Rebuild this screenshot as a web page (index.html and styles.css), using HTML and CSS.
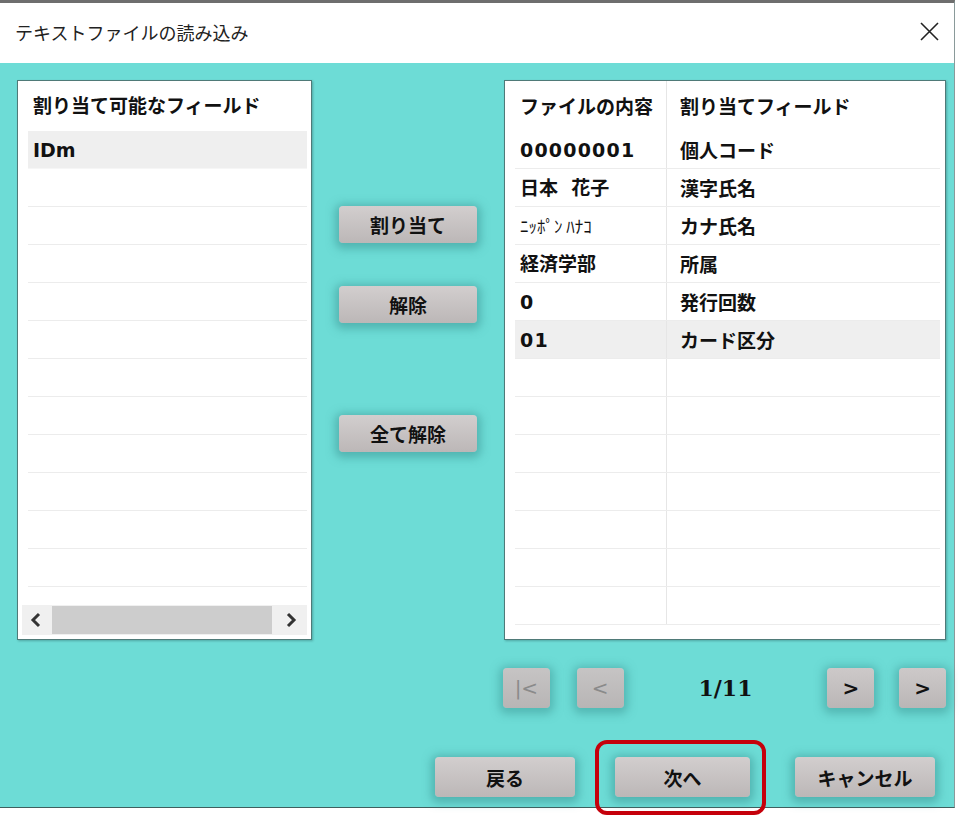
FILE: index.html
```html
<!DOCTYPE html>
<html lang="ja">

<head>
    <meta charset="UTF-8">
    <title>テキストファイルの読み込み</title>
    <link rel="stylesheet" href="styles.css">
</head>

<body>
    <div class="window">
        <div class="titlebar">
            <span class="title">テキストファイルの読み込み</span>
            <svg class="close" width="19" height="19" viewBox="0 0 19 19">
                <path d="M1 1 L18 18 M18 1 L1 18" stroke="#222" stroke-width="1.6" fill="none"/>
            </svg>
        </div>
        <div class="content">
            <div class="main">
                <div class="list">
                    <div class="list_head">割り当て可能なフィールド</div>
                    <div class="list_rows">
                        <div class="row sel">IDm</div>
                        <div class="row"></div>
                        <div class="row"></div>
                        <div class="row"></div>
                        <div class="row"></div>
                        <div class="row"></div>
                        <div class="row"></div>
                        <div class="row"></div>
                        <div class="row"></div>
                        <div class="row"></div>
                        <div class="row"></div>
                        <div class="row"></div>
                    </div>
                    <div class="hscroll">
                        <svg width="30" height="30" viewBox="0 0 30 30">
                            <path d="M17 9 L11 15 L17 21" stroke="#333" stroke-width="3" fill="none"/>
                        </svg>
                        <div class="thumb"></div>
                        <svg width="35" height="30" viewBox="0 0 35 30">
                            <path d="M16 9 L22 15 L16 21" stroke="#333" stroke-width="3" fill="none"/>
                        </svg>
                    </div>
                </div>

                <div class="mid">
                    <a href="javascript:;" class="btn btn_assign">割り当て</a>
                    <a href="javascript:;" class="btn btn_clear">解除</a>
                    <a href="javascript:;" class="btn btn_all">全て解除</a>
                </div>

                <div class="table">
                    <div class="trow thead">
                        <div class="c1">ファイルの内容</div>
                        <div class="c2">割り当てフィールド</div>
                    </div>
                    <div class="trow"><div class="c1 num">00000001</div><div class="c2">個人コード</div></div>
                    <div class="trow"><div class="c1">日本&nbsp;&nbsp;花子</div><div class="c2">漢字氏名</div></div>
                    <div class="trow"><div class="c1 kana">ﾆｯﾎﾟﾝ ﾊﾅｺ</div><div class="c2">カナ氏名</div></div>
                    <div class="trow"><div class="c1">経済学部</div><div class="c2">所属</div></div>
                    <div class="trow"><div class="c1 num">0</div><div class="c2">発行回数</div></div>
                    <div class="trow sel"><div class="c1 num">01</div><div class="c2">カード区分</div></div>
                    <div class="trow"><div class="c1"></div><div class="c2"></div></div>
                    <div class="trow"><div class="c1"></div><div class="c2"></div></div>
                    <div class="trow"><div class="c1"></div><div class="c2"></div></div>
                    <div class="trow"><div class="c1"></div><div class="c2"></div></div>
                    <div class="trow"><div class="c1"></div><div class="c2"></div></div>
                    <div class="trow"><div class="c1"></div><div class="c2"></div></div>
                    <div class="trow"><div class="c1"></div><div class="c2"></div></div>
                </div>
            </div>

            <div class="pager">
                <a href="javascript:;" class="pbtn off">|&lt;</a>
                <a href="javascript:;" class="pbtn off prev">&lt;</a>
                <span class="page">1/11</span>
                <a href="javascript:;" class="pbtn">&gt;</a>
                <a href="javascript:;" class="pbtn last">&gt;</a>
            </div>

            <div class="footer">
                <a href="javascript:;" class="btn fbtn">戻る</a>
                <a href="javascript:;" class="btn fbtn next">次へ</a>
                <a href="javascript:;" class="btn fbtn cancel">キャンセル</a>
            </div>
        </div>
    </div>
</body>

</html>
```

FILE: styles.css
```css
* {
    margin: 0;
    padding: 0;
    box-sizing: border-box;
}

body {
    width: 960px;
    height: 820px;
    background: #fff;
    font-family: "DejaVu Sans", "Noto Sans CJK JP", sans-serif;
    color: #111;
    overflow: hidden;
}

body a {
    text-decoration: none;
    color: #111;
}

.window {
    width: 955px;
    border-top: 3px solid #6e6e6e;
    border-right: 1px solid #8a9a9a;
    border-bottom: 1px solid #3f5f5e;
}

.titlebar {
    height: 60px;
    background: #fff;
    display: flex;
    align-items: center;
    justify-content: space-between;
    padding: 0 15px 0 15px;
}

.title {
    font-family: "Noto Sans CJK JP", sans-serif;
    font-size: 18px;
    color: #222;
    margin-top: -2px;
}

.close {
    margin-top: -3px;
}

.content {
    background: #6ddcd6;
    padding: 17px 8px 10px 17px;
}

.main {
    display: flex;
    height: 560px;
}

/* 左のリスト */
.list {
    width: 295px;
    background: #fff;
    border: 1px solid #4f7a78;
    box-shadow: 1px 1px 2px rgba(40, 90, 90, 0.4);
    display: flex;
    flex-direction: column;
    padding: 0 4px 4px 4px;
}

.list_head {
    height: 50px;
    line-height: 50px;
    padding-left: 11px;
    font-size: 19px;
    font-weight: bold;
}

.list_rows {
    flex: 1;
    overflow: hidden;
}

.row {
    height: 38px;
    line-height: 38px;
    margin-left: 6px;
    padding-left: 5px;
    border-bottom: 1px solid #ececec;
    font-size: 19px;
    font-weight: bold;
}

.row.sel {
    background: #efefef;
    border-bottom-color: #f6f6f6;
}

.hscroll {
    height: 30px;
    display: flex;
    align-items: center;
    background: #f0f0f0;
}

.hscroll .thumb {
    flex: 1;
    height: 28px;
    background: #cdcdcd;
}

/* 中央のボタン */
.mid {
    width: 192px;
    display: flex;
    flex-direction: column;
    align-items: center;
    padding-top: 126px;
}

.btn {
    display: flex;
    align-items: center;
    justify-content: center;
    font-family: "Noto Sans CJK JP", sans-serif;
    font-weight: bold;
    font-size: 19px;
    background: linear-gradient(#d2cece, #bcb7b7);
    border-radius: 4px;
    box-shadow: 0 2px 8px 4px rgba(60, 150, 148, 0.55);
}

.mid .btn {
    width: 138px;
    height: 37px;
}

.btn_clear {
    margin-top: 43px;
}

.btn_all {
    margin-top: 92px;
}

/* 右のテーブル */
.table {
    width: 442px;
    background: #fff;
    border: 1px solid #4f7a78;
    box-shadow: 1px 1px 2px rgba(40, 90, 90, 0.4);
    padding: 0 5px 0 10px;
    overflow: hidden;
}

.trow {
    display: flex;
    height: 38px;
    line-height: 38px;
    border-bottom: 1px solid #ececec;
    font-size: 19px;
    font-weight: bold;
}

.trow.thead {
    height: 50px;
    line-height: 50px;
    border-bottom: none;
    font-family: "Noto Sans CJK JP", sans-serif;
}

.trow.sel {
    background: #efefef;
}

.c1 {
    width: 152px;
    padding-left: 5px;
    border-right: 1px solid #e6e6e6;
    white-space: nowrap;
}

.c2 {
    flex: 1;
    padding-left: 13px;
    font-family: "Noto Sans CJK JP", sans-serif;
}

.c1.num {
    letter-spacing: 1.2px;
}

.c1.kana {
    font-family: "Noto Sans CJK JP", sans-serif;
    font-weight: normal;
    font-size: 17px;
}

/* ページ送り */
.pager {
    display: flex;
    align-items: center;
    height: 40px;
    margin-top: 28px;
    padding-left: 486px;
}

.pbtn {
    width: 47px;
    height: 40px;
    display: flex;
    align-items: center;
    justify-content: center;
    font-size: 20px;
    font-weight: bold;
    background: linear-gradient(#cdc9c9, #bab6b6);
    border-radius: 4px;
    box-shadow: 0 2px 8px 4px rgba(60, 150, 148, 0.5);
}

.pbtn.off {
    color: #8a8a8a;
    font-weight: normal;
    background: linear-gradient(#c6c4c4, #b8b5b5);
}

.pbtn.prev {
    margin-left: 27px;
}

.page {
    width: 205px;
    text-align: center;
    font-family: "DejaVu Serif", serif;
    font-weight: bold;
    font-size: 22px;
    color: #111;
}

.pbtn.last {
    margin-left: 25px;
}

/* 下のボタン */
.footer {
    display: flex;
    height: 40px;
    margin-top: 49px;
    padding-left: 418px;
}

.fbtn {
    width: 140px;
    height: 40px;
}

.fbtn.next {
    width: 135px;
    margin-left: 40px;
    position: relative;
}

.fbtn.next::after {
    content: "";
    position: absolute;
    left: -20px;
    top: -17px;
    right: -16px;
    bottom: -18px;
    border: 4px solid #c5000b;
    border-radius: 12px;
}

.fbtn.cancel {
    margin-left: 45px;
}
```
